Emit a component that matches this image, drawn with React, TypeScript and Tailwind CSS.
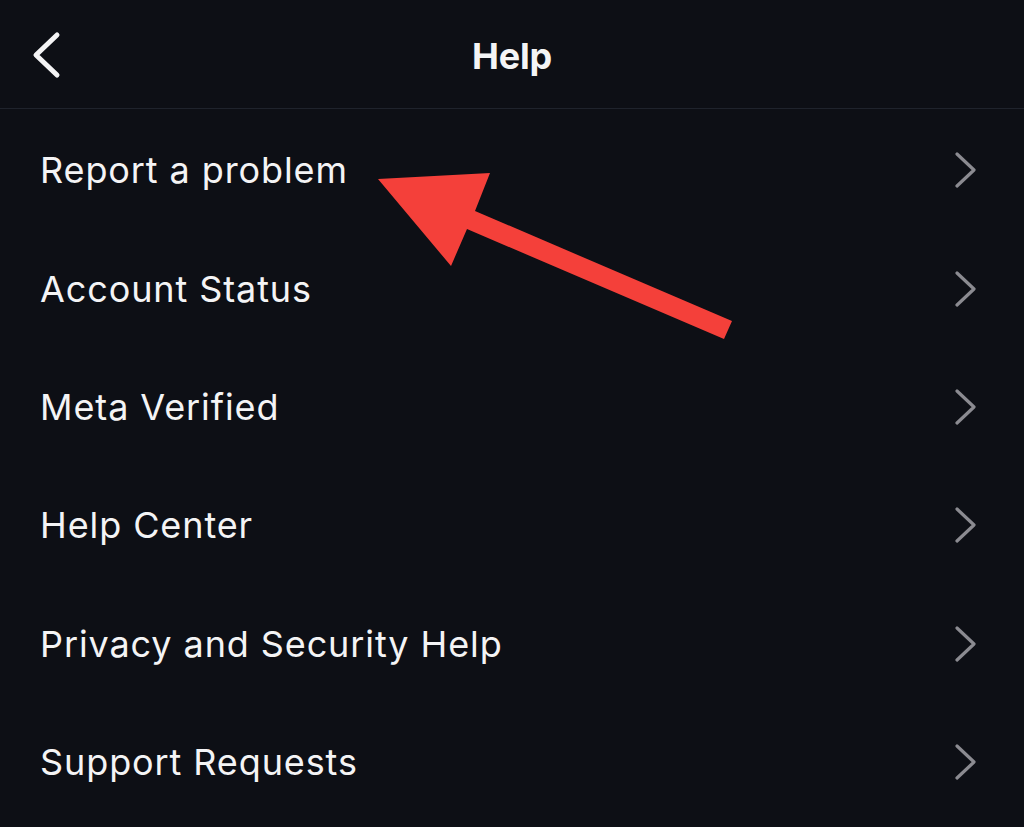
const items = [
  'Report a problem',
  'Account Status',
  'Meta Verified',
  'Help Center',
  'Privacy and Security Help',
  'Support Requests',
];

export default function App() {
  return (
    <div
      className="relative w-[1024px] h-[827px] overflow-hidden bg-[#0d0f15] text-[#f4f4f5]"
      style={{ fontFamily: 'Inter, "Noto Sans", sans-serif' }}
    >
      {/* Header */}
      <header className="relative h-[109px] flex items-center justify-center border-b border-[#1f232c]">
        <button className="absolute left-[28px] top-[28px] w-[36px] h-[54px] flex items-center justify-center">
          <svg width="36" height="54" viewBox="0 0 36 54" fill="none">
            <polyline points="29,7 8,27 29,47" stroke="#f4f4f5" strokeWidth="5" strokeLinecap="round" strokeLinejoin="round" />
          </svg>
        </button>
        <h1 className="text-[36px] font-bold leading-none tracking-[-0.2px] mt-[3px]">Help</h1>
      </header>

      {/* Rows */}
      <ul className="pt-[2px]">
        {items.map((label) => (
          <li key={label} className="h-[118.4px] flex items-center justify-between pl-[40px] pr-[48px]">
            <span className="text-[36px] leading-none tracking-[0.9px]">{label}</span>
            <svg width="24" height="38" viewBox="0 0 24 38" fill="none">
              <polyline points="5,3 22,19 5,35" stroke="#8b8b91" strokeWidth="3.2" strokeLinecap="round" strokeLinejoin="round" />
            </svg>
          </li>
        ))}
      </ul>

      {/* Annotation arrow */}
      <svg className="absolute inset-0 pointer-events-none" width="1024" height="827" viewBox="0 0 1024 827">
        <polygon
          points="378,179 490,173 475,211 732,321 724,339 467,229 451,266"
          fill="#f4403a"
        />
      </svg>
    </div>
  );
}
